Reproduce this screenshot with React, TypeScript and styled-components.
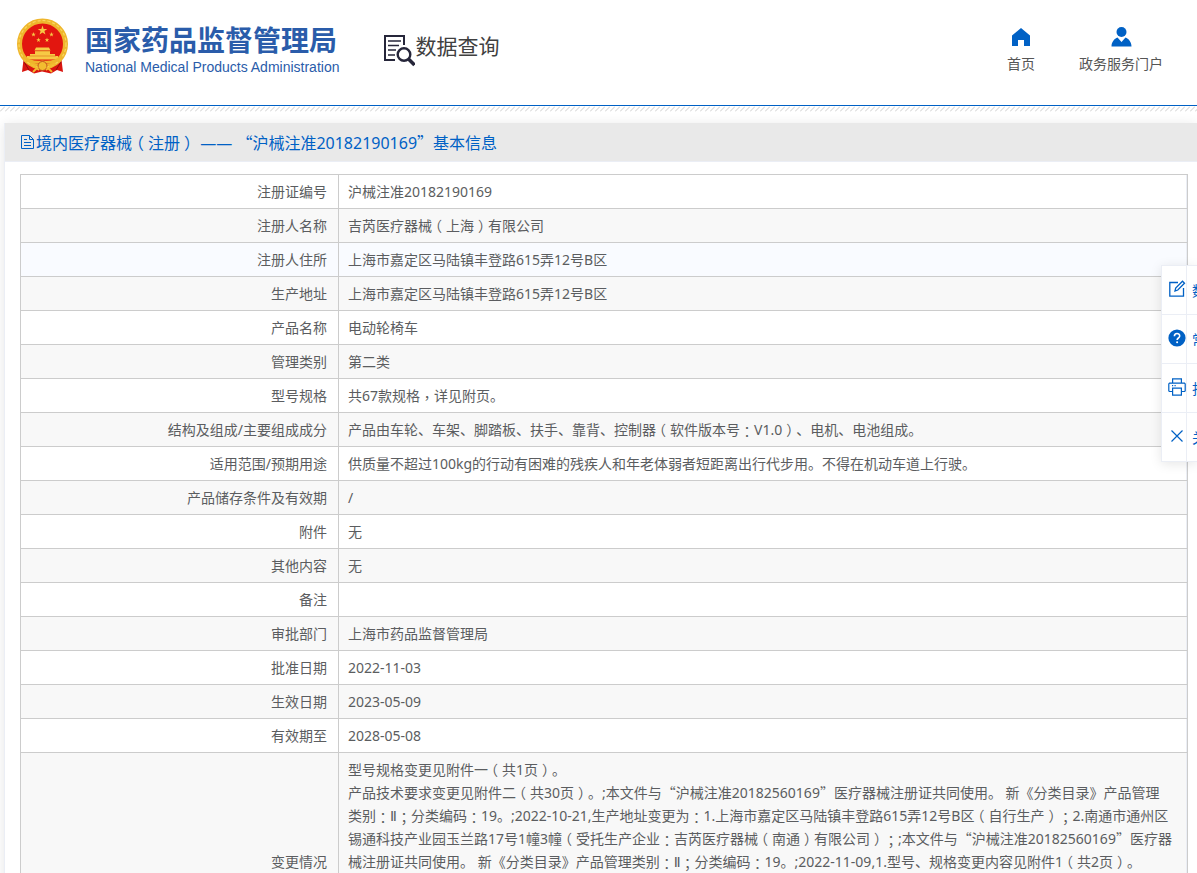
import React from 'react';
import styled, { createGlobalStyle } from 'styled-components';

const sans = '"Noto Sans", "Noto Sans CJK SC", sans-serif';
const blue = '#0061c5';

const GlobalStyle = createGlobalStyle`
  * { box-sizing: border-box; }
  body {
    margin: 0;
    overflow-x: hidden;
    background: #fff;
    color: #5b5d60;
    font: 14px/23px ${sans};
    text-spacing-trim: space-all;
  }
`;

const Header = styled.header`
  display: flex;
  align-items: flex-start;
  height: 105px;
  padding: 18px 34px 0 16px;
`;

const Brand = styled.a`
  display: flex;
  gap: 16px;
  color: #2a5caa;
  text-decoration: none;
  white-space: nowrap;
`;

const BrandNames = styled.span`
  display: flex;
  flex-direction: column;
  padding-top: 4px;
`;

const BrandName = styled.span`
  font: 700 28px/34px "Noto Sans CJK SC", sans-serif;
`;

const BrandSubtitle = styled.span`
  font: 14px/22px "Liberation Sans", sans-serif;
`;

const Section = styled.h1`
  display: flex;
  align-items: center;
  height: 34px;
  margin: 10px 0 0 44px;
  color: #404040;
  font: 400 21px/34px "Noto Sans CJK SC", sans-serif;
  white-space: nowrap;

  svg { margin-top: 12px; }
`;

const Nav = styled.nav`
  display: flex;
  gap: 44px;
  margin: 8px 0 0 auto;
`;

const NavLink = styled.a`
  display: flex;
  flex-direction: column;
  align-items: center;
  gap: 4px;
  color: #555;
  line-height: 23px;
  text-decoration: none;
`;

const Hatch = styled.div`
  height: 7px;
  border-top: 1px solid ${blue};
`;

const Main = styled.main`
  padding: 11px 0 0 4px;
  overflow: hidden;
`;

const Panel = styled.section`
  border-left: 1px solid #ebeef5;
  background: #fff;
  box-shadow: 0 2px 12px rgba(0, 0, 0, 0.1);
`;

const PanelTitle = styled.h2`
  display: flex;
  align-items: center;
  height: 39px;
  margin: 0;
  padding: 0 15px;
  border-bottom: 1px solid #ebeef5;
  background: #e9e9e9;
  color: ${blue};
  font: 400 16px/24px ${sans};
  white-space: pre;
`;

const PanelBody = styled.div`
  padding: 12px 9px 20px 15px;
`;

const Table = styled.table`
  width: 100%;
  border-collapse: collapse;
  table-layout: fixed;
`;

const LabelColumn = styled.col`
  width: 318px;
`;

const Row = styled.tr<{ $hover?: boolean; $tall?: boolean }>`
  height: ${(p) => (p.$tall ? '218px' : 'auto')};
  background: ${(p) => (p.$hover ? '#f9fbff' : '#fff')};
  vertical-align: ${(p) => (p.$tall ? 'top' : 'middle')};
  &:nth-child(even) { background: #f8f8f8; }
`;

const cell = `
  padding: 5px 11px;
  border: 1px solid #ccc;
  font-weight: 400;
  line-height: 23px;
`;

const Label = styled.th`
  ${cell}
  text-align: right;
  vertical-align: middle;
`;

const Value = styled.td`
  ${cell}
  padding-right: 14px;
  padding-left: 9px;
  box-shadow: inset -1px 0 #ebeef5;
  text-align: left;
  vertical-align: inherit;
  white-space: pre-line;
`;

const FullWidth = styled.span`
  font-family: "Noto Sans CJK SC", sans-serif;
`;

const Centered = styled.span`
  font-family: "Noto Sans CJK TC", sans-serif;
  line-height: 1;
  vertical-align: -2px;
`;

const Opening = styled(FullWidth)`
  margin: 0 4px 0 -4px;
`;

const Closing = styled(FullWidth)`
  margin: 0 -4px 0 4px;
`;

const Numeral = styled.span`
  font-family: "DejaVu Sans", sans-serif;
  line-height: 1;
`;

const Tools = styled.aside`
  position: fixed;
  top: 265px;
  right: 0;
  width: 36px;
  background: #fff;
  border-top: 1px solid #ebeef5;
  border-left: 1px solid #ebeef5;
  box-shadow: 0 2px 12px rgba(0, 0, 0, 0.1);
`;

const Tool = styled.button`
  display: grid;
  grid-template-columns: 25px 14px;
  align-items: center;
  gap: 5px;
  width: 100%;
  height: 49px;
  padding: 0;
  overflow: hidden;
  border: 0;
  border-bottom: 1px solid #ebeef5;
  background: #fff;
  color: ${blue};
  font: 14px/23px ${sans};
`;

const ToolIcon = styled.span`
  display: flex;
  align-items: center;
  justify-content: center;
  height: 48px;
  padding: 0 0 2px 5px;
  border-right: 1px solid #ebeef5;
`;

const marks: Record<string, React.ElementType> = {
  '“': FullWidth,
  '”': FullWidth,
  '（': Opening,
  '）': Closing,
  '：': Centered,
  '；': Centered,
  '，': Centered,
  'Ⅱ': Numeral,
};

/* Quotes take a full em; brackets, colons, commas and semicolons sit mid-em. */
const Text = ({ children }: { children: string }) => (
  <>
    {children.split(/([“”（）：；，Ⅱ])/).map((part, i) => {
      const Mark = marks[part];
      return Mark ? <Mark key={i}>{part}</Mark> : part;
    })}
  </>
);

const star = (cx: number, cy: number, r: number) =>
  Array.from({ length: 10 }, (_, i) => {
    const a = (Math.PI / 5) * i - Math.PI / 2;
    const d = i % 2 ? r * 0.4 : r;
    return `${(cx + d * Math.cos(a)).toFixed(2)},${(cy + d * Math.sin(a)).toFixed(2)}`;
  }).join(' ');

const Emblem = () => (
  <svg width="53" height="56" viewBox="0 0 53 56" aria-hidden="true">
    <path d="M8 38 6 54l6-2 6 3.500 8-2 9 2 6-3.500 6 2-2-16z" fill="#d9140f" />
    <path d="M8 44l5 8M45 44l-5 8" stroke="#8f0f0c" strokeWidth="1" />
    <circle cx="26.500" cy="26" r="23" fill="#e2160f" stroke="#efb62c" strokeWidth="5" />
    <circle cx="26.500" cy="26" r="23.500" fill="none" stroke="#f9d75e" strokeWidth="1.200" strokeDasharray="3 2" />
    <g fill="#f7c945">
      <polygon points={star(26.5, 12.5, 5)} />
      <polygon points={star(17.5, 16.5, 2.4)} />
      <polygon points={star(35.5, 16.5, 2.4)} />
      <polygon points={star(22.5, 22, 2.4)} />
      <polygon points={star(31, 22, 2.4)} />
      <path d="M20 29.500h13l1.500 3h-16zM19 33h15v3h5v2h3v3.500H11V38h3v-2h5z" />
    </g>
    <path d="M19 33h15M13 38h27" stroke="#d8701a" strokeWidth=".6" />
    <path d="M7 39c6 5 12 6 19.500 5C34 45 40 44 46 39" fill="none" stroke="#efb62c" strokeWidth="3" />
    <circle cx="26.500" cy="48" r="4.500" fill="#f2bd30" stroke="#b8391a" strokeWidth=".8" />
    <path d="M14 46c5 0 6 5 9 6M39 46c-5 0-6 5-9 6M17 54l5-5M36 54l-5-5" fill="none" stroke="#f2bd30" strokeWidth="1.800" />
  </svg>
);

const SearchDocIcon = () => (
  <svg width="32" height="32" viewBox="0 0 32 32" fill="none" stroke="#26263a" strokeWidth="2" aria-hidden="true">
    <path d="M12 25H2V1h19v9" />
    <path d="M5 6h13M5 10.500h11M5 15h8M5 20h7" strokeWidth="1.500" />
    <circle cx="21" cy="19.500" r="6.300" strokeWidth="2.400" />
    <path d="M25.500 24l6 6" strokeWidth="3.500" />
  </svg>
);

const HomeIcon = () => (
  <svg width="22" height="22" viewBox="0 0 22 22" fill={blue} aria-hidden="true">
    <path d="M11 2L20 9.500V20H14V14H8V20H2V9.500z" />
  </svg>
);

const UserIcon = () => (
  <svg width="22" height="22" viewBox="0 0 22 22" fill={blue} aria-hidden="true">
    <circle cx="11.500" cy="6" r="5" />
    <path d="M7.500 11.500L11.500 16l4-4.500c3 1 6 4.500 6 9h-20c0-4.500 3-8 6-9z" />
  </svg>
);

const DocIcon = () => (
  <svg width="16" height="16" viewBox="0 0 16 16" fill="none" stroke={blue} aria-hidden="true">
    <path d="M1.500 1.500h8l4 4v9h-12zM9.500 1.500v4h4M4 5.500h3M4 8.500h7M4 11.500h7" />
  </svg>
);

const EditIcon = () => (
  <svg width="18" height="18" viewBox="0 0 18 18" fill="none" stroke={blue} strokeWidth="1.300" aria-hidden="true">
    <path d="M10 2.500H1.800v13.700h13.700V8" />
    <path d="M7 11l.7-3L14.500 1.200l2 2L9.800 10z" />
  </svg>
);

const HelpIcon = () => (
  <svg width="18" height="18" viewBox="0 0 18 18" aria-hidden="true">
    <circle cx="9" cy="9" r="8.600" fill={blue} />
    <path d="M6.400 7.200C6.400 3.600 11.700 3.700 11.700 7c0 2-2.600 2-2.600 4" fill="none" stroke="#fff" strokeWidth="1.600" />
    <circle cx="9.100" cy="13.200" r="1" fill="#fff" />
  </svg>
);

const PrintIcon = () => (
  <svg width="18" height="18" viewBox="0 0 18 18" fill="none" stroke={blue} strokeWidth="1.200" aria-hidden="true">
    <path d="M4.600 5V.8h8.800V5M4.600 13.500H1.500L.8 13V6l.7-.9h15l.7.9v7l-.7.5h-3.100" />
    <path d="M4.600 10.200h8.800v7H4.600zM4 7.600h1.200M6.500 7.600h1.200" />
  </svg>
);

const CloseIcon = () => (
  <svg width="18" height="18" viewBox="0 0 18 18" fill="none" stroke={blue} strokeWidth="1.200" aria-hidden="true">
    <path d="M3.500 3.500l11 11M14.500 3.500l-11 11" />
  </svg>
);

const rows: [string, string][] = [
  ['注册证编号', '沪械注准20182190169'],
  ['注册人名称', '吉芮医疗器械（上海）有限公司'],
  ['注册人住所', '上海市嘉定区马陆镇丰登路615弄12号B区'],
  ['生产地址', '上海市嘉定区马陆镇丰登路615弄12号B区'],
  ['产品名称', '电动轮椅车'],
  ['管理类别', '第二类'],
  ['型号规格', '共67款规格，详见附页。'],
  ['结构及组成/主要组成成分', '产品由车轮、车架、脚踏板、扶手、靠背、控制器（软件版本号：V1.0）、电机、电池组成。'],
  ['适用范围/预期用途', '供质量不超过100kg的行动有困难的残疾人和年老体弱者短距离出行代步用。不得在机动车道上行驶。'],
  ['产品储存条件及有效期', '/'],
  ['附件', '无'],
  ['其他内容', '无'],
  ['备注', ''],
  ['审批部门', '上海市药品监督管理局'],
  ['批准日期', '2022-11-03'],
  ['生效日期', '2023-05-09'],
  ['有效期至', '2028-05-08'],
];

const changes = `型号规格变更见附件一（共1页）。
产品技术要求变更见附件二（共30页）。;本文件与“沪械注准20182560169”医疗器械注册证共同使用。 新《分类目录》产品管理类别：Ⅱ；分类编码：19。;2022-10-21,生产地址变更为：1.上海市嘉定区马陆镇丰登路615弄12号B区（自行生产）；2.南通市通州区锡通科技产业园玉兰路17号1幢3幢（受托生产企业：吉芮医疗器械（南通）有限公司）；;本文件与“沪械注准20182560169”医疗器械注册证共同使用。 新《分类目录》产品管理类别：Ⅱ；分类编码：19。;2022-11-09,1.型号、规格变更内容见附件1（共2页）。`;

const tools = [
  { icon: <EditIcon />, label: '数' },
  { icon: <HelpIcon />, label: '常' },
  { icon: <PrintIcon />, label: '打' },
  { icon: <CloseIcon />, label: '关' },
];

export default function App() {
  return (
    <>
      <GlobalStyle />
      <Header>
        <Brand href="#">
          <Emblem />
          <BrandNames>
            <BrandName>国家药品监督管理局</BrandName>
            <BrandSubtitle>National Medical Products Administration</BrandSubtitle>
          </BrandNames>
        </Brand>
        <Section><SearchDocIcon />数据查询</Section>
        <Nav>
          <NavLink href="#"><HomeIcon />首页</NavLink>
          <NavLink href="#"><UserIcon />政务服务门户</NavLink>
        </Nav>
      </Header>
      <Hatch>
        <svg width="100%" height="6" display="block" aria-hidden="true">
          <defs>
            <pattern id="hatch" width="5" height="6" patternUnits="userSpaceOnUse">
              <path d="M0 5.500L5 .5" stroke="#ccc" strokeWidth="1" />
            </pattern>
          </defs>
          <rect width="100%" height="6" fill="url(#hatch)" />
        </svg>
      </Hatch>
      <Main>
        <Panel>
          <PanelTitle><DocIcon /><span><Text>境内医疗器械（注册） —— “沪械注准20182190169”基本信息</Text></span></PanelTitle>
          <PanelBody>
            <Table>
              <colgroup><LabelColumn /><col /></colgroup>
              <tbody>
                {rows.map(([label, value], i) => (
                  <Row key={label} $hover={i === 2}>
                    <Label scope="row">{label}</Label>
                    <Value><Text>{value}</Text></Value>
                  </Row>
                ))}
                <Row $tall>
                  <Label scope="row">变更情况</Label>
                  <Value><Text>{changes}</Text></Value>
                </Row>
              </tbody>
            </Table>
          </PanelBody>
        </Panel>
      </Main>
      <Tools>
        {tools.map((tool) => (
          <Tool key={tool.label} type="button">
            <ToolIcon>{tool.icon}</ToolIcon>
            <span>{tool.label}</span>
          </Tool>
        ))}
      </Tools>
    </>
  );
}
